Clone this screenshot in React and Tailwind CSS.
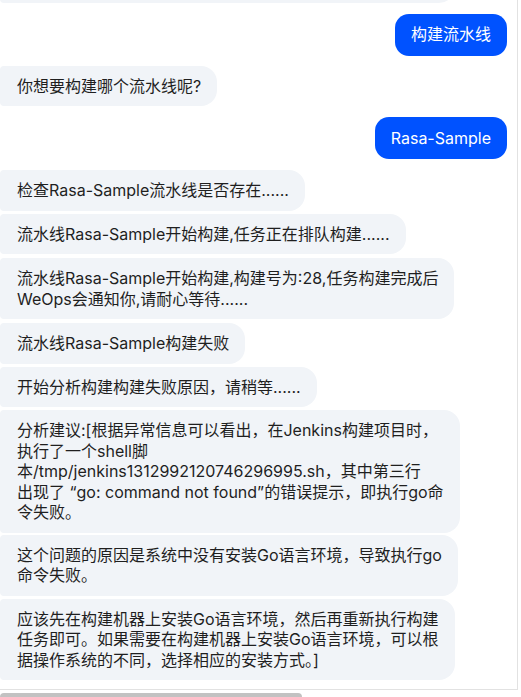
import React from "react";

const font = { fontFamily: '"Inter", "Noto Sans CJK SC", sans-serif' };

function Bot({ children, className = "", mt = "mt-[3px]" }) {
  return (
    <div className={`${mt} self-start max-w-[460px] w-fit bg-[#f1f4f8] text-[#1f1f1f] text-[16px] leading-[20.5px] pl-[17px] pr-4 py-[10px] rounded-r-2xl rounded-l-[4px] ${className}`}>
      {children}
    </div>
  );
}

function User({ children, mt }) {
  return (
    <div className={`${mt} self-end bg-[#0052ff] text-white text-[16px] leading-[21px] px-4 py-[10.5px] rounded-[14px]`}>
      {children}
    </div>
  );
}

export default function App() {
  return (
    <div className="w-[521px] h-[697px] bg-white overflow-hidden" style={font}>
      <div className="w-[518px] h-[690px] border-r border-b border-[#e2e2e2] overflow-hidden flex flex-col justify-end pr-[10px] pb-[9px]">
        <div className="shrink-0 self-start w-[455px] h-[40px] bg-[#f1f4f8] rounded-r-2xl rounded-l-[4px]" />
        <User mt="mt-[11px]">构建流水线</User>
        <Bot mt="mt-[10px]">你想要构建哪个流水线呢?</Bot>
        <User mt="mt-[11px]">Rasa-Sample</User>
        <Bot mt="mt-[11px]">检查Rasa-Sample流水线是否存在......</Bot>
        <Bot>流水线Rasa-Sample开始构建,任务正在排队构建......</Bot>
        <Bot mt="mt-[4px]">
          流水线Rasa-Sample开始构建,构建号为:28,任务构建完成后
          <br />
          WeOps会通知你,请耐心等待......
        </Bot>
        <Bot mt="mt-[4px]">流水线Rasa-Sample构建失败</Bot>
        <Bot>开始分析构建构建失败原因，请稍等......</Bot>
        <Bot>
          分析建议:[根据异常信息可以看出，在Jenkins构建项目时，
          <br />
          执行了一个shell脚
          <br />
          本/tmp/jenkins1312992120746296995.sh，其中第三行
          <br />
          出现了 “go: command not found”的错误提示，即执行go命
          <br />
          令失败。
        </Bot>
        <Bot mt="mt-[2px]">
          这个问题的原因是系统中没有安装Go语言环境，导致执行go
          <br />
          命令失败。
        </Bot>
        <Bot>
          应该先在构建机器上安装Go语言环境，然后再重新执行构建
          <br />
          任务即可。如果需要在构建机器上安装Go语言环境，可以根
          <br />
          据操作系统的不同，选择相应的安装方式。]
        </Bot>
      </div>
      <div className="h-[7px] pt-[3px]">
        <div className="w-[302px] h-[8px] rounded-full bg-[#c2c2c2]" />
      </div>
    </div>
  );
}
